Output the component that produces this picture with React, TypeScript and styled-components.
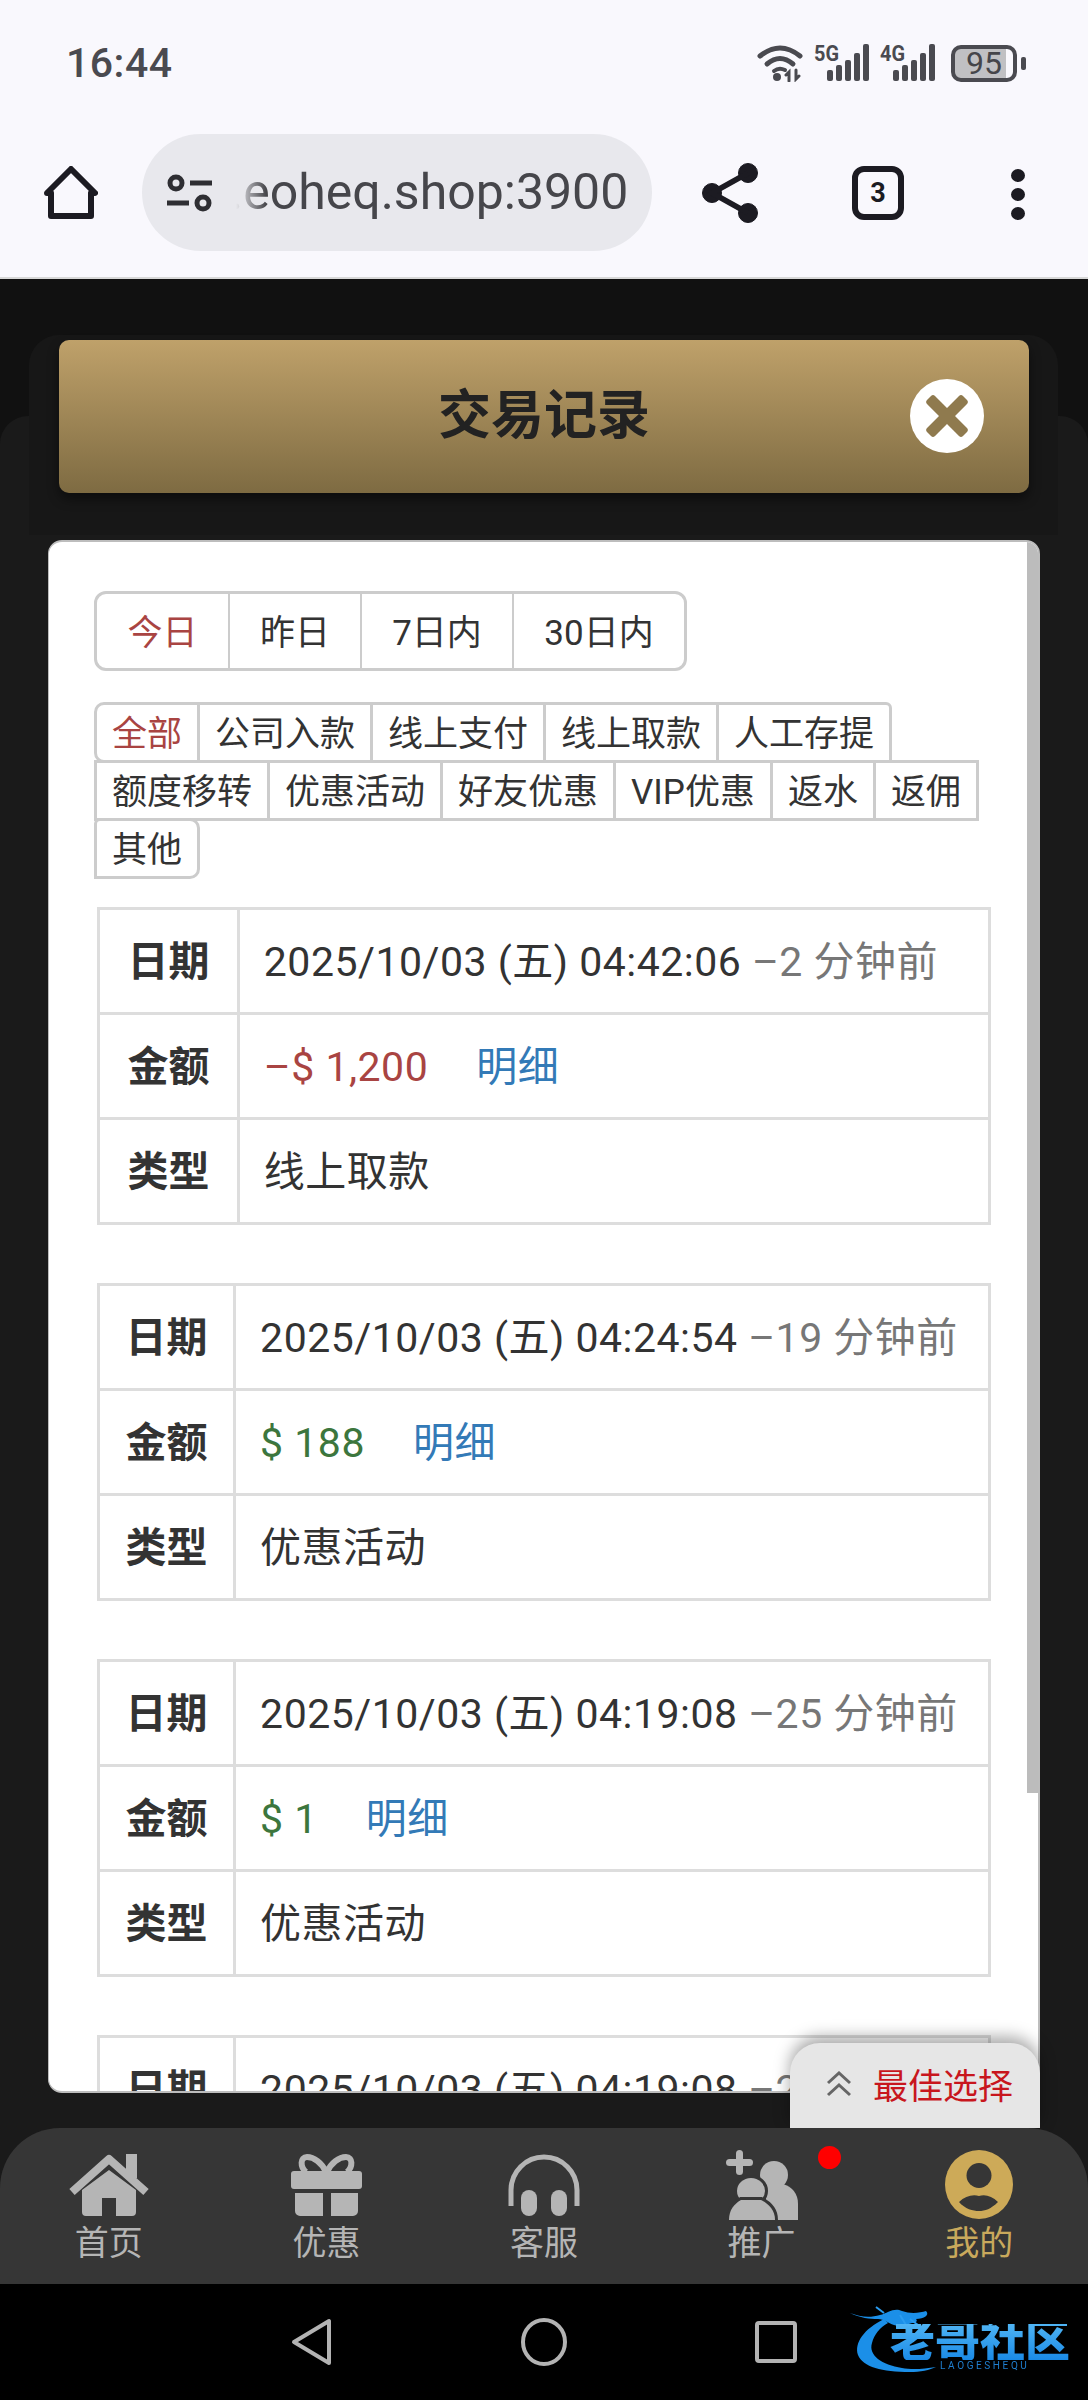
import React from "react";
import styled, { createGlobalStyle } from "styled-components";

const Global = createGlobalStyle`
  html, body { margin: 0; padding: 0; background: #000; }
  * { box-sizing: border-box; }
  body { font-family: Roboto, "Noto Sans CJK SC", sans-serif; }
`;

const Screen = styled.div`
  width: 1088px; height: 2400px; overflow: hidden; display: flex; flex-direction: column; background: #000;
`;
const Chrome = styled.header`
  height: 279px; flex: none; background: #f9f8fd; border-bottom: 2px solid #d8d8d8; display: flex; flex-direction: column;
`;
const StatusRow = styled.div`
  height: 126px; padding: 0 71px 0 66px; display: flex; align-items: center; justify-content: space-between; flex: none;
`;
const Time = styled.span`
  font-size: 41px; font-weight: 500; color: #4a4a50; letter-spacing: 0.5px;
`;
const StatusIcons = styled.div`
  display: flex; align-items: center; gap: 11px;
`;
const Battery = styled.div`
  width: 66px; height: 37px; border: 4px solid #4a4a50; border-radius: 10px; position: relative; margin-left: 5px;
  display: flex; align-items: center; justify-content: center; font-size: 32px; color: #45454a; line-height: 1;
  background: linear-gradient(90deg, #c0c0c3 0 88%, transparent 88%);
  &::after { content: ""; position: absolute; right: -13px; top: 8px; width: 5px; height: 13px; border-radius: 2px; background: #4a4a50; }
`;
const Toolbar = styled.div`
  flex: 1; display: flex; align-items: flex-start; padding: 8px 0 0 44px;
`;
const HomeBtn = styled.div`
  width: 54px; height: 54px; margin-top: 32px; flex: none;
`;
const UrlPill = styled.div`
  width: 510px; height: 117px; margin-left: 44px; border-radius: 59px; background: #e8e8ed; display: flex; align-items: center; padding-left: 25px; flex: none;
`;
const UrlText = styled.span`
  width: 420px; margin-left: 18px; font-size: 50px; color: #46464b; font-weight: 400; white-space: nowrap; overflow: hidden; line-height: 1.3; flex: none;
  -webkit-mask-image: linear-gradient(90deg, transparent 6px, #000 36px);
  mask-image: linear-gradient(90deg, transparent 6px, #000 36px);
`;
const ShareBtn = styled.div`
  width: 56px; height: 60px; margin: 29px 0 0 50px; flex: none;
`;
const TabCount = styled.div`
  width: 52px; height: 54px; margin: 32px 0 0 94px; border: 6px solid #1c1b22; border-radius: 12px; flex: none;
  display: flex; align-items: center; justify-content: center; font-size: 27px; font-weight: 700; color: #1c1b22;
`;
const Kebab = styled.div`
  width: 14px; margin: 35px 0 0 107px; display: flex; flex-direction: column; gap: 6px; flex: none;
`;
const Dot = styled.i`
  display: block; width: 14px; height: 13px; border-radius: 50%; background: #1c1b22;
`;

const Content = styled.main`
  height: 1849px; flex: none; position: relative; background: #111; padding-top: 61px;
  &::before { content: ""; position: absolute; left: 0; right: 0; top: 137px; bottom: 0; background: #1a1a1a; border-radius: 28px 28px 0 0; }
  &::after { content: ""; position: absolute; left: 29px; right: 30px; top: 56px; height: 200px; background: #171717; border-radius: 30px 30px 0 0; }
`;
const ModalHeader = styled.div`
  position: relative; z-index: 1; height: 153px; margin: 0 59px; border-radius: 10px;
  background: linear-gradient(180deg, #bfa16a 0%, #7e6b42 100%); box-shadow: 0 6px 12px rgba(0,0,0,.45);
  display: flex; align-items: center; justify-content: center;
`;
const ModalTitle = styled.h1`
  margin: 0; font-size: 53px; font-weight: 700; color: #222; line-height: 1;
`;
const CloseBtn = styled.div`
  position: absolute; right: 45px; top: 39px; width: 74px; height: 74px; border-radius: 50%; background: #fff;
  display: flex; align-items: center; justify-content: center;
`;
const Panel = styled.section`
  position: relative; z-index: 1; height: 1553px; margin: 47px 48px 0; background: #fff; border: 2px solid #bdbdbd; border-left-width: 1px; border-radius: 14px; overflow: hidden;
  padding: 49px 0 0 45px;
`;
const ScrollThumb = styled.div`
  position: absolute; right: -1px; top: -2px; width: 12px; height: 1253px; background: #bcbcbc;
`;
const Inner = styled.div`
  width: 900px;
`;
const RangeGroup = styled.div`
  display: inline-flex; height: 80px; border: 3px solid #ccc; border-radius: 12px; vertical-align: top;
`;
const RangeCell = styled.div<{ $w: number; $active?: boolean }>`
  width: ${(p) => p.$w}px; padding-bottom: 4px; display: flex; align-items: center; justify-content: center; font-size: 35px;
  color: ${(p) => (p.$active ? "#a94442" : "#333")};
  & + & { border-left: 2px solid #ccc; }
`;
const TabWrap = styled.div`
  display: flex; flex-wrap: wrap; margin-top: 31px; padding: 3px 0 0 3px;
`;
const Tab = styled.div<{ $active?: boolean; $radius?: string }>`
  height: 61px; padding: 0 15px 4px; margin: -3px 0 0 -3px; border: 3px solid #ccc; display: flex; align-items: center; font-size: 35px; background: #fff; white-space: nowrap;
  color: ${(p) => (p.$active ? "#a94442" : "#333")};
  border-radius: ${(p) => p.$radius || "0"};
`;
const Records = styled.div`
  margin: 28px 0 0 3px; width: 894px; display: flex; flex-direction: column; gap: 58px;
`;
const RecordTable = styled.table`
  width: 100%; border-collapse: collapse; flex: none;
`;
const Row = styled.tr`
  height: 105px;
`;
const Label = styled.th`
  border: 3px solid #ddd; padding: 0 25px 6px; font-size: 41px; font-weight: 700; color: #333; white-space: nowrap; text-align: center;
`;
const Value = styled.td`
  border: 3px solid #ddd; padding: 0 24px 6px; font-size: 41px; letter-spacing: 0.5px; color: #333; white-space: nowrap; text-align: left;
`;
const Ago = styled.span`
  color: #777;
`;
const Amount = styled.span<{ $neg?: boolean }>`
  color: ${(p) => (p.$neg ? "#a94442" : "#3c763d")};
`;
const Detail = styled.span`
  color: #337ab7; margin-left: 48px;
`;
const BestChoice = styled.div`
  position: absolute; z-index: 2; right: 48px; bottom: 0; width: 250px; height: 85px; border-radius: 30px 30px 0 0; background: #e6e6e6;
  box-shadow: 0 -6px 16px rgba(0,0,0,.35); display: flex; align-items: center; padding: 0 0 4px 36px; gap: 21px; font-size: 35px; color: #c8161d;
`;

const NavBack = styled.div`
  background: #1a1a1a; flex: none;
`;
const Nav = styled.nav`
  height: 156px; background: #363636; border-radius: 60px 60px 0 0; position: relative; z-index: 3; display: flex;
`;
const NavItem = styled.div<{ $active?: boolean }>`
  flex: 1; position: relative; display: flex; flex-direction: column; align-items: center; padding-top: 22px;
  color: ${(p) => (p.$active ? "#c9a95c" : "#b5b5b5")}; font-size: 34px; line-height: 40px;
`;
const NavIcon = styled.div`
  height: 69px; display: flex; align-items: center; justify-content: center; margin-bottom: 4px;
`;
const RedDot = styled.span`
  position: absolute; left: 165px; top: 18px; width: 23px; height: 23px; border-radius: 50%; background: #f00;
`;
const SystemBar = styled.div`
  flex: 1; background: #000; position: relative; display: flex; align-items: center; justify-content: center;
`;
const SysCell = styled.div`
  width: 232px; display: flex; justify-content: center;
`;
const Logo = styled.div`
  position: absolute; left: 850px; top: 21px; width: 226px; height: 70px; filter: blur(0.6px);
`;
const LogoName = styled.span`
  position: absolute; left: 40px; top: 19px; font-size: 45px; line-height: 36px; font-weight: 900; white-space: nowrap;
  background: linear-gradient(180deg, #4fb4f4, #1a8ae6); -webkit-background-clip: text; background-clip: text; color: transparent;
`;
const LogoSub = styled.span`
  position: absolute; left: 90px; top: 55px; font-size: 10px; line-height: 12px; letter-spacing: 2.6px; color: #1f7fd0; white-space: nowrap;
`;

const WifiIcon = () => (
  <svg width="46" height="38" viewBox="0 0 46 38" fill="none" stroke="#4a4a50" strokeLinecap="round">
    <path d="M3 12 Q23 -4 43 12" strokeWidth="5" />
    <path d="M10 20 Q23 9 36 20" strokeWidth="5" />
    <path d="M17 27 Q22 23 28 26" strokeWidth="4" />
    <circle cx="20" cy="33" r="4" fill="#4a4a50" stroke="none" />
    <path d="M32 37V28l-3 3M39 26v9l3-3" strokeWidth="3" />
  </svg>
);
const SignalIcon = ({ label }: { label: string }) => (
  <svg width="55" height="38" viewBox="0 0 55 38" overflow="visible">
    <text x="0" y="17" fontSize="22" fontWeight="700" fontFamily="Roboto, sans-serif" fill="#4a4a50" textLength="25" lengthAdjust="spacingAndGlyphs">{label}</text>
    <g fill="#4a4a50">
      <rect x="13" y="26" width="6" height="11" rx="2" />
      <rect x="22" y="21" width="6" height="16" rx="2" />
      <rect x="31" y="16" width="6" height="21" rx="2" />
      <rect x="40" y="9" width="6" height="28" rx="2" />
      <rect x="49" y="0" width="6" height="37" rx="2" />
    </g>
  </svg>
);

const HomeGlyph = () => (
  <svg width="54" height="54" viewBox="0 0 54 54" fill="none" stroke="#1c1b22" strokeWidth="6" strokeLinejoin="round">
    <path d="M7 50V27H3L27 3l24 24h-4v23Z" />
  </svg>
);
const TuneGlyph = () => (
  <svg width="45" height="38" viewBox="0 0 45 38" fill="none" stroke="#2e2e33" strokeWidth="5">
    <circle cx="9" cy="9" r="6" />
    <path d="M23 9h22M0 29h22" />
    <circle cx="36" cy="29" r="6" />
  </svg>
);
const ShareGlyph = () => (
  <svg width="56" height="60" viewBox="0 0 56 60" fill="#1c1b22" stroke="#1c1b22">
    <circle cx="10" cy="30" r="9.5" />
    <circle cx="46" cy="10" r="9.5" />
    <circle cx="46" cy="50" r="9.5" />
    <path d="M46 10 10 30l36 20" fill="none" strokeWidth="5.5" />
  </svg>
);
const CloseGlyph = () => (
  <svg width="42" height="42" viewBox="0 0 42 42" fill="#8f7a4e">
    <path d="M9 1 21 13 33 1a3 3 0 0 1 4 0l4 4a3 3 0 0 1 0 4L29 21l12 12a3 3 0 0 1 0 4l-4 4a3 3 0 0 1-4 0L21 29 9 41a3 3 0 0 1-4 0l-4-4a3 3 0 0 1 0-4l12-12L1 9a3 3 0 0 1 0-4l4-4a3 3 0 0 1 4 0Z" />
  </svg>
);
const ChevronsUp = () => (
  <svg width="26" height="26" viewBox="0 0 26 26" fill="none" stroke="#666" strokeWidth="3">
    <path d="M2 12 13 2l11 10M2 24l11-10 11 10" />
  </svg>
);

const NavHome = () => (
  <svg width="80" height="62" viewBox="0 0 80 62" fill="#b5b5b5">
    <path d="M13 36 40 16l27 20v22a4 4 0 0 1-4 4H47V44H33v18H17a4 4 0 0 1-4-4Z" />
    <path d="M3 38 40 5l37 33" fill="none" stroke="#b5b5b5" strokeWidth="8" strokeLinejoin="round" />
    <rect x="57" y="0" width="11" height="24" />
  </svg>
);
const NavGift = () => (
  <svg width="71" height="62" viewBox="0 0 71 62" fill="#b5b5b5">
    <path d="M35 18C31 9 23 3 16 3 9 3 9 13 15 18M36 18C40 9 48 3 55 3 62 3 62 13 56 18" fill="none" stroke="#b5b5b5" strokeWidth="6" />
    <rect x="0" y="17" width="71" height="18" rx="3" />
    <path d="M4 39h28v23H9a5 5 0 0 1-5-5ZM40 39h27v18a5 5 0 0 1-5 5H40Z" />
  </svg>
);
const NavHeadset = () => (
  <svg width="72" height="62" viewBox="0 0 72 62" fill="#b5b5b5">
    <path d="M3 52V36a33 33 0 0 1 66 0v16" fill="none" stroke="#b5b5b5" strokeWidth="5" />
    <rect x="13" y="36" width="16" height="26" rx="8" />
    <rect x="43" y="36" width="16" height="26" rx="8" />
  </svg>
);
const NavUsers = () => (
  <svg width="72" height="70" viewBox="0 0 72 70" fill="#b5b5b5">
    <rect x="10" y="0" width="7" height="25" rx="3.5" />
    <rect x="0" y="9" width="27" height="7" rx="3.5" />
    <circle cx="48" cy="25" r="14" />
    <path d="M40 34h17c9 3 15 9 15 20v16H40Z" />
    <g stroke="#363636" strokeWidth="6" style={{ paintOrder: "stroke" }}>
      <ellipse cx="25" cy="41" rx="14" ry="13" />
      <path d="M15 50c-7 4-12 10-12 20h46c0-10-6-16-14-20Z" />
    </g>
  </svg>
);
const NavUser = () => (
  <svg width="68" height="69" viewBox="0 0 68 69">
    <ellipse cx="34" cy="34.5" rx="34" ry="34.5" fill="#cdaa58" />
    <circle cx="34" cy="25.5" r="12.5" fill="#363636" />
    <path d="M14 52C20 46 28 44 34 46 40 44 47 46 53 52 46 59 40 61 34 61 28 61 20 59 14 52Z" fill="#363636" />
  </svg>
);
const BackGlyph = () => (
  <svg width="42" height="48" viewBox="0 0 42 48" fill="none" stroke="#b3b3b3" strokeWidth="4" strokeLinejoin="round">
    <path d="M38 3v42L3 24Z" />
  </svg>
);
const HomeCircle = () => (
  <svg width="46" height="48" viewBox="0 0 46 48" fill="none" stroke="#b3b3b3" strokeWidth="4">
    <ellipse cx="23" cy="24" rx="21" ry="22" />
  </svg>
);
const RecentGlyph = () => (
  <svg width="42" height="42" viewBox="0 0 42 42" fill="none" stroke="#b3b3b3" strokeWidth="4" strokeLinejoin="round">
    <rect x="2" y="2" width="38" height="38" rx="2" />
  </svg>
);
const Dragon = () => (
  <svg width="226" height="70" viewBox="0 0 226 70" fill="none">
    <path d="M34 14C14 24 4 38 8 50c5 12 24 17 52 17 10 0 20-2 26-5-12 2-24 3-34 1C32 60 18 50 22 38c2-8 8-16 16-20Z" fill="#1b8fe8" />
    <path d="M0 8c10 4 20 5 30 2 8-2 14-8 22-4 8 3 18 2 24 0 4 4-2 8-10 8 2 2 0 4-4 4-6 2-12 4-18 2-6-2-10-6-16-6-8 0-18-1-28-6Z" fill="#1b8fe8" />
    <path d="M26 2l8 6M50 10l6 10M60 14l8 6" stroke="#2a9cf0" strokeWidth="2" />
  </svg>
);

const ranges = [
  { t: "今日", w: 131, a: true },
  { t: "昨日", w: 132 },
  { t: "7日内", w: 152 },
  { t: "30日内", w: 172 },
];
const tabs: { t: string; a?: boolean; r?: string }[] = [
  { t: "全部", a: true, r: "10px 0 0 10px" },
  { t: "公司入款" },
  { t: "线上支付" },
  { t: "线上取款" },
  { t: "人工存提", r: "0 6px 0 0" },
  { t: "额度移转" },
  { t: "优惠活动" },
  { t: "好友优惠" },
  { t: "VIP优惠" },
  { t: "返水" },
  { t: "返佣" },
  { t: "其他", r: "6px 10px 10px 0" },
];
const records = [
  { date: "2025/10/03 (五) 04:42:06", ago: "–2 分钟前", amt: "–$ 1,200", neg: true, kind: "线上取款" },
  { date: "2025/10/03 (五) 04:24:54", ago: "–19 分钟前", amt: "$ 188", kind: "优惠活动" },
  { date: "2025/10/03 (五) 04:19:08", ago: "–25 分钟前", amt: "$ 1", kind: "优惠活动" },
  { date: "2025/10/03 (五) 04:19:08", ago: "–25 分钟前", amt: "$ 1", kind: "优惠活动" },
];
const navs = [
  { t: "首页", i: <NavHome /> },
  { t: "优惠", i: <NavGift /> },
  { t: "客服", i: <NavHeadset /> },
  { t: "推广", i: <NavUsers />, dot: true },
  { t: "我的", i: <NavUser />, a: true },
];

export default function App() {
  return (
    <Screen>
      <Global />
      <Chrome>
        <StatusRow>
          <Time>16:44</Time>
          <StatusIcons>
            <WifiIcon />
            <SignalIcon label="5G" />
            <SignalIcon label="4G" />
            <Battery>95</Battery>
          </StatusIcons>
        </StatusRow>
        <Toolbar>
          <HomeBtn><HomeGlyph /></HomeBtn>
          <UrlPill>
            <TuneGlyph />
            <UrlText>.eoheq.shop:3900</UrlText>
          </UrlPill>
          <ShareBtn><ShareGlyph /></ShareBtn>
          <TabCount>3</TabCount>
          <Kebab><Dot /><Dot /><Dot /></Kebab>
        </Toolbar>
      </Chrome>
      <Content>
        <ModalHeader>
          <ModalTitle>交易记录</ModalTitle>
          <CloseBtn><CloseGlyph /></CloseBtn>
        </ModalHeader>
        <Panel>
          <ScrollThumb />
          <Inner>
            <RangeGroup>
              {ranges.map((r) => (
                <RangeCell key={r.t} $w={r.w} $active={r.a}>{r.t}</RangeCell>
              ))}
            </RangeGroup>
            <TabWrap>
              {tabs.map((t) => (
                <Tab key={t.t} $active={t.a} $radius={t.r}>{t.t}</Tab>
              ))}
            </TabWrap>
            <Records>
              {records.map((r, i) => (
                <RecordTable key={i}>
                  <tbody>
                    <Row><Label>日期</Label><Value>{r.date} <Ago>{r.ago}</Ago></Value></Row>
                    <Row><Label>金额</Label><Value><Amount $neg={r.neg}>{r.amt}</Amount><Detail>明细</Detail></Value></Row>
                    <Row><Label>类型</Label><Value>{r.kind}</Value></Row>
                  </tbody>
                </RecordTable>
              ))}
            </Records>
          </Inner>
        </Panel>
        <BestChoice><ChevronsUp />最佳选择</BestChoice>
      </Content>
      <NavBack>
        <Nav>
          {navs.map((n) => (
            <NavItem key={n.t} $active={n.a}>
              <NavIcon>{n.i}</NavIcon>
              {n.t}
              {n.dot && <RedDot />}
            </NavItem>
          ))}
        </Nav>
      </NavBack>
      <SystemBar>
        <SysCell><BackGlyph /></SysCell>
        <SysCell><HomeCircle /></SysCell>
        <SysCell><RecentGlyph /></SysCell>
        <Logo>
          <Dragon />
          <LogoName>老哥社区</LogoName>
          <LogoSub>LAOGESHEQU</LogoSub>
        </Logo>
      </SystemBar>
    </Screen>
  );
}
